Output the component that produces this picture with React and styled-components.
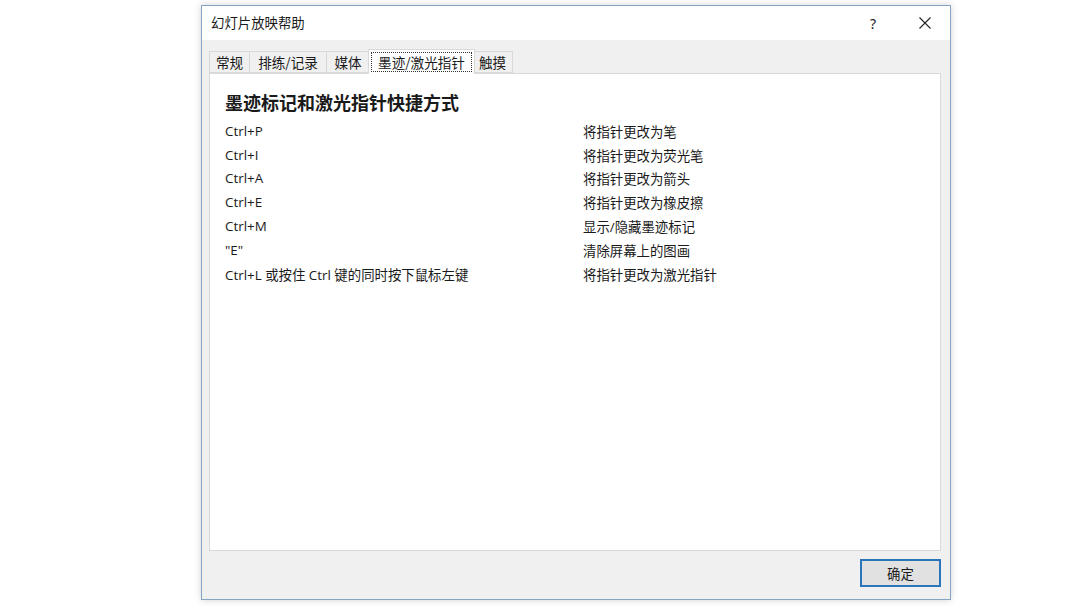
import React from "react";
import styled, { createGlobalStyle } from "styled-components";

const Global = createGlobalStyle`
  html, body { margin: 0; padding: 0; background: #ffffff; }
  body { font-family: "Open Sans", "Noto Sans CJK SC", sans-serif; }
  * { box-sizing: border-box; }
`;

const Page = styled.div`
  width: 1080px;
  height: 607px;
  padding: 5px 0 0 201px;
  background: #ffffff;
`;

const Dialog = styled.div`
  width: 750px;
  height: 595px;
  border: 1px solid #84a4c2;
  box-shadow: 0 0 7px rgba(0, 0, 0, 0.18);
  background: #f0f0f0;
  display: flex;
  flex-direction: column;
`;

const TitleBar = styled.div`
  height: 34px;
  background: #ffffff;
  display: flex;
  align-items: center;
  padding: 0 0 0 9px;
  flex-shrink: 0;
`;

const Title = styled.div`
  flex: 1;
  font-size: 13.4px;
  color: #1a1a1a;
  font-family: "Noto Sans CJK SC", sans-serif;
  padding-bottom: 2px;
`;

const TitleButton = styled.div`
  width: ${(p) => p.$w}px;
  height: 34px;
  display: flex;
  align-items: center;
  justify-content: center;
  font-size: 14px;
  color: #222;
  font-family: "Noto Sans", sans-serif;
`;

const Body = styled.div`
  flex: 1;
  display: flex;
  flex-direction: column;
  padding: 9px 9px 12px 7px;
`;

const TabStrip = styled.div`
  display: flex;
  align-items: flex-end;
  height: 24px;
  position: relative;
  z-index: 1;
`;

const Tab = styled.div`
  width: ${(p) => p.$w}px;
  height: ${(p) => (p.$active ? 25 : 22)}px;
  margin: ${(p) => (p.$active ? "0 -2px -1px -2px" : "0")};
  padding: ${(p) => (p.$active ? "2px 2px 0" : "0")};
  background: ${(p) => (p.$active ? "#ffffff" : "#f0f0f0")};
  border: 1px solid #d9d9d9;
  border-bottom: ${(p) => (p.$active ? "none" : "1px solid #d9d9d9")};
  border-left: ${(p) => (p.$first || p.$active ? "1px solid #d9d9d9" : "none")};
  font-size: 13.6px;
  color: #1a1a1a;
  font-family: "Noto Sans CJK SC", sans-serif;
  display: flex;
  justify-content: center;
  align-items: ${(p) => (p.$active ? "flex-start" : "center")};
  white-space: nowrap;
  position: relative;
  flex-shrink: 0;
  z-index: ${(p) => (p.$active ? 2 : 1)};
`;

const FocusLabel = styled.span`
  border: 1px dotted #333;
  width: 100%;
  text-align: center;
  line-height: 18px;
  height: 20px;
  display: block;
`;

const Panel = styled.div`
  flex: 1;
  background: #ffffff;
  border: 1px solid #d9d9d9;
  padding: 16px 15px 0 15px;
`;

const Heading = styled.div`
  font-size: 18px;
  font-weight: bold;
  line-height: 24px;
  color: #1a1a1a;
  font-family: "Noto Sans CJK SC", sans-serif;
  margin-bottom: 5px;
`;

const Row = styled.div`
  display: grid;
  grid-template-columns: 358px 1fr;
  height: 23.8px;
  align-items: center;
  font-size: 13.4px;
  color: #1a1a1a;
`;

const Cell = styled.div`
  white-space: nowrap;
`;

const Footer = styled.div`
  display: flex;
  justify-content: flex-end;
  padding-top: 8px;
`;

const Button = styled.div`
  width: 81px;
  height: 28px;
  border: 2px solid #2b75bd;
  background: #e1e1e1;
  display: flex;
  align-items: center;
  justify-content: center;
  font-size: 13.4px;
  color: #1a1a1a;
  font-family: "Noto Sans CJK SC", sans-serif;
`;

const tabs = [
  { label: "常规", w: 41 },
  { label: "排练/记录", w: 77 },
  { label: "媒体", w: 43 },
  { label: "墨迹/激光指针", w: 107, active: true },
  { label: "触摸", w: 40 },
];

const rows = [
  ["Ctrl+P", "将指针更改为笔"],
  ["Ctrl+I", "将指针更改为荧光笔"],
  ["Ctrl+A", "将指针更改为箭头"],
  ["Ctrl+E", "将指针更改为橡皮擦"],
  ["Ctrl+M", "显示/隐藏墨迹标记"],
  ['"E"', "清除屏幕上的图画"],
  ["Ctrl+L 或按住 Ctrl 键的同时按下鼠标左键", "将指针更改为激光指针"],
];

export default function App() {
  return (
    <Page>
      <Global />
      <Dialog>
        <TitleBar>
          <Title>幻灯片放映帮助</Title>
          <TitleButton $w={20}>?</TitleButton>
          <TitleButton $w={24} />
          <TitleButton $w={36}>
            <svg width="12" height="12" viewBox="0 0 12 12">
              <path d="M0.5 0.5 L11.5 11.5 M11.5 0.5 L0.5 11.5" stroke="#222" strokeWidth="1.1" fill="none" />
            </svg>
          </TitleButton>
          <TitleButton $w={7} />
        </TitleBar>
        <Body>
          <TabStrip>
            {tabs.map((t, i) =>
              t.active ? (
                <Tab key={t.label} $w={t.w} $active>
                  <FocusLabel>{t.label}</FocusLabel>
                </Tab>
              ) : (
                <Tab key={t.label} $w={t.w} $first={i === 0}>
                  {t.label}
                </Tab>
              )
            )}
          </TabStrip>
          <Panel>
            <Heading>墨迹标记和激光指针快捷方式</Heading>
            {rows.map(([k, v]) => (
              <Row key={k}>
                <Cell>{k}</Cell>
                <Cell>{v}</Cell>
              </Row>
            ))}
          </Panel>
          <Footer>
            <Button>确定</Button>
          </Footer>
        </Body>
      </Dialog>
    </Page>
  );
}
